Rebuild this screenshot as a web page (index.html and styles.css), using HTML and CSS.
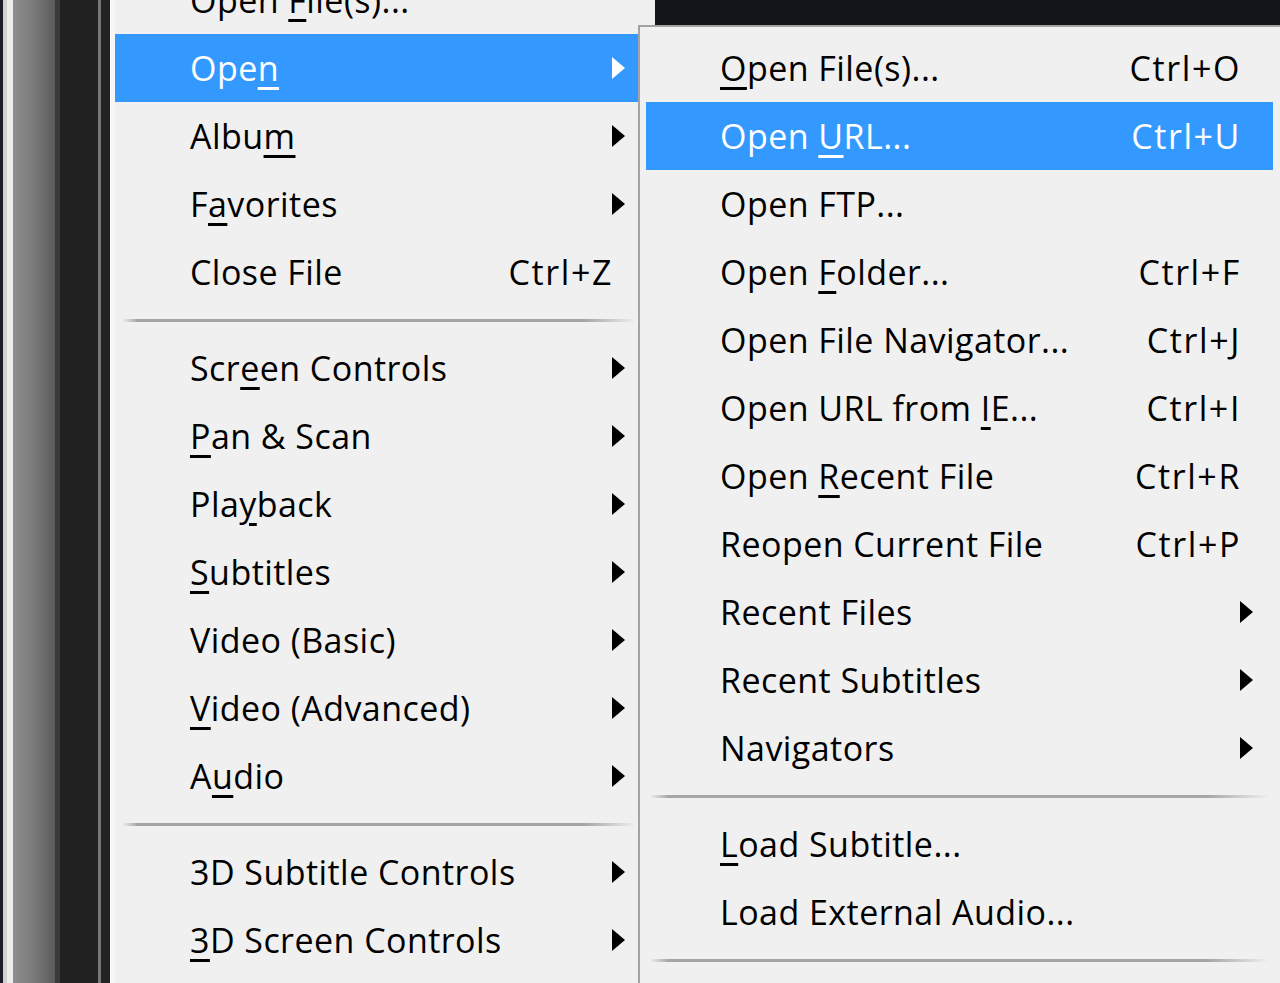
FILE: index.html
```html
<!DOCTYPE html>
<html lang="en">
<head>
<meta charset="utf-8">
<title>Menu</title>
<link rel="stylesheet" href="styles.css">
</head>
<body>
<div class="page">
  <div class="strip">
    <div class="s s1"></div>
    <div class="s s2"></div>
    <div class="s s3"></div>
    <div class="s s4"></div>
    <div class="s s5"></div>
    <div class="s s6"></div>
    <div class="s s7"></div>
    <div class="s s8"></div>
  </div>
  <div class="main-menu">
    <ul class="items">
      <li class="item"><span class="label">Open <u>F</u>ile(s)...</span><span class="key"></span><span class="arrow-col"></span></li>
      <li class="item active"><span class="label">Ope<u>n</u></span><span class="key"></span><span class="arrow-col"><i class="arrow"></i></span></li>
      <li class="item"><span class="label">Albu<u>m</u></span><span class="key"></span><span class="arrow-col"><i class="arrow"></i></span></li>
      <li class="item"><span class="label">F<u>a</u>vorites</span><span class="key"></span><span class="arrow-col"><i class="arrow"></i></span></li>
      <li class="item"><span class="label">Close File</span><span class="key">Ctrl+Z</span><span class="arrow-col"></span></li>
      <li class="sep"><span class="line"></span></li>
      <li class="item"><span class="label">Scr<u>e</u>en Controls</span><span class="key"></span><span class="arrow-col"><i class="arrow"></i></span></li>
      <li class="item"><span class="label"><u>P</u>an &amp; Scan</span><span class="key"></span><span class="arrow-col"><i class="arrow"></i></span></li>
      <li class="item"><span class="label">Pla<u>y</u>back</span><span class="key"></span><span class="arrow-col"><i class="arrow"></i></span></li>
      <li class="item"><span class="label"><u>S</u>ubtitles</span><span class="key"></span><span class="arrow-col"><i class="arrow"></i></span></li>
      <li class="item"><span class="label">Video (Basic)</span><span class="key"></span><span class="arrow-col"><i class="arrow"></i></span></li>
      <li class="item"><span class="label"><u>V</u>ideo (Advanced)</span><span class="key"></span><span class="arrow-col"><i class="arrow"></i></span></li>
      <li class="item"><span class="label">A<u>u</u>dio</span><span class="key"></span><span class="arrow-col"><i class="arrow"></i></span></li>
      <li class="sep"><span class="line"></span></li>
      <li class="item"><span class="label">3D Subtitle Controls</span><span class="key"></span><span class="arrow-col"><i class="arrow"></i></span></li>
      <li class="item"><span class="label"><u>3</u>D Screen Controls</span><span class="key"></span><span class="arrow-col"><i class="arrow"></i></span></li>
    </ul>
  </div>
  <div class="sub-menu">
    <ul class="items">
      <li class="item"><span class="label"><u>O</u>pen File(s)...</span><span class="key">Ctrl+O</span><span class="arrow-col"></span></li>
      <li class="item active"><span class="label">Open <u>U</u>RL...</span><span class="key">Ctrl+U</span><span class="arrow-col"></span></li>
      <li class="item"><span class="label">Open FTP...</span><span class="key"></span><span class="arrow-col"></span></li>
      <li class="item"><span class="label">Open <u>F</u>older...</span><span class="key">Ctrl+F</span><span class="arrow-col"></span></li>
      <li class="item"><span class="label">Open File Navigator...</span><span class="key">Ctrl+J</span><span class="arrow-col"></span></li>
      <li class="item"><span class="label">Open URL from <u>I</u>E...</span><span class="key">Ctrl+I</span><span class="arrow-col"></span></li>
      <li class="item"><span class="label">Open <u>R</u>ecent File</span><span class="key">Ctrl+R</span><span class="arrow-col"></span></li>
      <li class="item"><span class="label">Reopen Current File</span><span class="key">Ctrl+P</span><span class="arrow-col"></span></li>
      <li class="item"><span class="label">Recent Files</span><span class="key"></span><span class="arrow-col"><i class="arrow"></i></span></li>
      <li class="item"><span class="label">Recent Subtitles</span><span class="key"></span><span class="arrow-col"><i class="arrow"></i></span></li>
      <li class="item"><span class="label">Navigators</span><span class="key"></span><span class="arrow-col"><i class="arrow"></i></span></li>
      <li class="sep"><span class="line"></span></li>
      <li class="item"><span class="label"><u>L</u>oad Subtitle...</span><span class="key"></span><span class="arrow-col"></span></li>
      <li class="item"><span class="label">Load External Audio...</span><span class="key"></span><span class="arrow-col"></span></li>
      <li class="sep"><span class="line"></span></li>
    </ul>
  </div>
</div>
</body>
</html>
```

FILE: styles.css
```css
* { box-sizing: border-box; }
html, body {
  margin: 0;
  padding: 0;
  width: 1280px;
  height: 983px;
  overflow: hidden;
  background: #14141b;
  font-family: "Open Sans", "Noto Sans", "Liberation Sans", sans-serif;
}
.page {
  position: relative;
  display: flex;
  height: 983px;
}
.strip {
  display: flex;
  width: 110px;
  height: 983px;
  flex: none;
}
.s { height: 100%; }
.s1 { width: 3px; background: #1c1c28; }
.s2 { width: 4px; background: #cfcfcf; }
.s3 { width: 6px; background: #ededed; }
.s4 { width: 42px; background: linear-gradient(to right, #8e8e8e, #7a7a7a 50%, #5a5a5a); }
.s5 { width: 5px; background: #3a3a3a; }
.s6 { width: 38px; background: #212121; }
.s7 { width: 3px; background: #777; }
.s8 { width: 9px; background: #232323; }

.main-menu {
  width: 545px;
  flex: none;
  height: 983px;
  background: #f0f0f0;
  border-left: 5px solid #f7f7f7;
  overflow: hidden;
}
.items {
  list-style: none;
  margin: 0;
  padding: 0;
}
.main-menu .items { margin-top: -34px; }

.item {
  display: grid;
  align-items: center;
  height: 68px;
  font-size: 34px;
  letter-spacing: 0.45px;
  color: #000;
  white-space: nowrap;
}
.main-menu .item {
  grid-template-columns: 1fr auto 38px;
  padding-left: 75px;
  width: 535px;
}
.sub-menu .item {
  grid-template-columns: 1fr auto 33px;
  padding-left: 74px;
  width: 627px;
}
.item.active {
  background: #3399ff;
  color: #fff;
}
.label, .key { line-height: 68px; }
.key {
  text-align: right;
  letter-spacing: 1.6px;
  margin-right: -1px;
}
u {
  text-decoration-thickness: 3px;
  text-underline-offset: 6px;
}
.arrow-col { display: flex; align-items: center; height: 68px; }
.arrow {
  display: block;
  width: 0;
  height: 0;
  border-left: 13px solid #000;
  border-top: 11px solid transparent;
  border-bottom: 11px solid transparent;
}
.item.active .arrow { border-left-color: #fff; }

.sep {
  height: 28px;
  display: flex;
  align-items: center;
}
.main-menu .sep { padding: 0 14px 0 7px; width: 535px; }
.sub-menu .sep { padding: 0 4px 0 4px; width: 627px; }
.line {
  display: block;
  width: 100%;
  height: 3px;
  background: linear-gradient(to right, rgba(160,160,160,0), #a6a6a6 3%, #a6a6a6 90%, rgba(160,160,160,0));
}

.sub-menu {
  position: absolute;
  left: 638px;
  top: 25px;
  width: 643px;
  height: 970px;
  background: #f0f0f0;
  border-left: 2px solid #a3a3a3;
  border-top: 2px solid #a3a3a3;
  padding: 7px 6px 0 6px;
}
```
